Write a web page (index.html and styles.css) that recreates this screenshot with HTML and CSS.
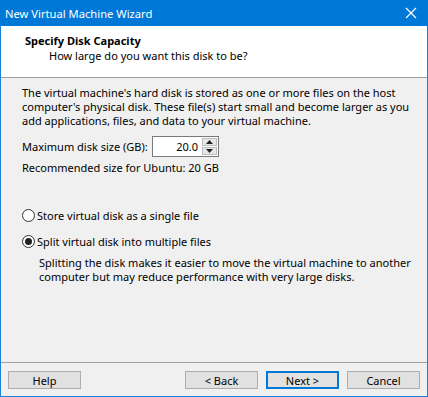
FILE: index.html
```html
<!DOCTYPE html>
<html lang="en">
<head>
    <meta charset="UTF-8">
    <title>New Virtual Machine Wizard</title>
    <link rel="stylesheet" href="styles.css">
</head>
<body>
    <div class="window">
        <div class="titlebar">
            <span class="title">New Virtual Machine Wizard</span>
            <svg class="close" width="12" height="12" viewBox="0 0 12 12">
                <path d="M1 1 L11 11 M11 1 L1 11" stroke="#fff" stroke-width="1.2" fill="none"/>
            </svg>
        </div>
        <div class="frame">
            <div class="header">
                <div class="heading">Specify Disk Capacity</div>
                <div class="subheading">How large do you want this disk to be?</div>
            </div>
            <div class="content">
                <p class="intro">The virtual machine's hard disk is stored as one or more files on the host computer's physical disk. These file(s) start small and become larger as you add applications, files, and data to your virtual machine.</p>
                <div class="size-row">
                    <label class="size-label">Maximum disk size (GB):</label>
                    <div class="spinbox">
                        <span class="spin-value">20.0</span>
                        <div class="spin-buttons">
                            <div class="spin-btn">
                                <svg width="7" height="4" viewBox="0 0 7 4"><path d="M0 4 L3.5 0 L7 4 Z" fill="#222"/></svg>
                            </div>
                            <div class="spin-btn">
                                <svg width="7" height="4" viewBox="0 0 7 4"><path d="M0 0 L3.5 4 L7 0 Z" fill="#222"/></svg>
                            </div>
                        </div>
                    </div>
                </div>
                <p class="recommend">Recommended size for Ubuntu: 20 GB</p>

                <div class="options">
                    <div class="radio-row">
                        <span class="radio"></span>
                        <span>Store virtual disk as a single file</span>
                    </div>
                    <div class="radio-row">
                        <span class="radio checked"></span>
                        <span>Split virtual disk into multiple files</span>
                    </div>
                    <p class="hint">Splitting the disk makes it easier to move the virtual machine to another computer but may reduce performance with very large disks.</p>
                </div>
            </div>
            <div class="footer">
                <button class="btn">Help</button>
                <div class="footer-right">
                    <button class="btn">&lt; Back</button>
                    <button class="btn default">Next &gt;</button>
                    <button class="btn">Cancel</button>
                </div>
            </div>
        </div>
    </div>
</body>
</html>
```

FILE: styles.css
```css
body {
    margin: 0;
    padding: 0;
    font-family: "Noto Sans", "DejaVu Sans", sans-serif;
    font-size: 11px;
    color: #000;
}
.window {
    width: 428px;
    height: 397px;
    display: flex;
    flex-direction: column;
    background-color: #f0f0f0;
}
.titlebar {
    height: 26px;
    flex-shrink: 0;
    background-color: #0078d7;
    color: #fff;
    display: flex;
    align-items: center;
    justify-content: space-between;
    padding: 0 11px 0 5px;
}
.title {
    font-size: 11.2px;
}
.frame {
    flex: 1;
    display: flex;
    flex-direction: column;
    border: 1px solid #1a80d8;
    border-top: none;
}
.header {
    height: 52px;
    box-sizing: border-box;
    background-color: #fff;
    border-bottom: 1px solid #a0a0a0;
    padding: 7px 0 0 24px;
}
.heading {
    font-weight: bold;
    line-height: 15px;
}
.subheading {
    margin-left: 24px;
    line-height: 15px;
}
.content {
    flex: 1;
    padding: 8px 8px 0 21px;
}
.intro {
    margin: 0;
    line-height: 14px;
}
.size-row {
    display: flex;
    align-items: center;
    margin-top: 8px;
}
.size-label {
    width: 130px;
}
.spinbox {
    width: 67px;
    height: 21px;
    box-sizing: border-box;
    border: 1px solid #7a7a7a;
    background: #fff;
    display: flex;
    align-items: center;
    justify-content: flex-end;
}
.spin-value {
    margin-right: 4px;
}
.spin-buttons {
    display: flex;
    flex-direction: column;
    gap: 1px;
    margin-right: 1px;
}
.spin-btn {
    width: 15px;
    height: 8px;
    background: #e6e6e6;
    border: 1px solid #bcbcbc;
    box-sizing: border-box;
    display: flex;
    align-items: center;
    justify-content: center;
}
.recommend {
    margin: 4px 0 0 0;
    line-height: 14px;
}
.options {
    margin-top: 33px;
}
.radio-row {
    display: flex;
    align-items: center;
    gap: 2px;
    height: 14px;
    margin-bottom: 12px;
}
.radio-row:first-child {
    margin-bottom: 12px;
}
.radio {
    width: 13px;
    height: 13px;
    box-sizing: border-box;
    border: 1px solid #333;
    border-radius: 50%;
    background: #fff;
    display: flex;
    align-items: center;
    justify-content: center;
}
.radio.checked::after {
    content: "";
    width: 7px;
    height: 7px;
    border-radius: 50%;
    background: #222;
}
.hint {
    margin: -4px 0 0 17px;
    line-height: 14px;
}
.footer {
    height: 34px;
    border-top: 1px solid #a0a0a0;
    display: flex;
    justify-content: space-between;
    align-items: flex-start;
    padding: 8px 7px 0 7px;
    box-sizing: border-box;
}
.footer-right {
    display: flex;
    gap: 8px;
}
.btn {
    width: 73px;
    height: 18px;
    font-family: inherit;
    font-size: 11px;
    background-color: #e1e1e1;
    border: 1px solid #adadad;
    padding: 0;
    color: #000;
}
.btn.default {
    border: 2px solid #0078d7;
}
```
